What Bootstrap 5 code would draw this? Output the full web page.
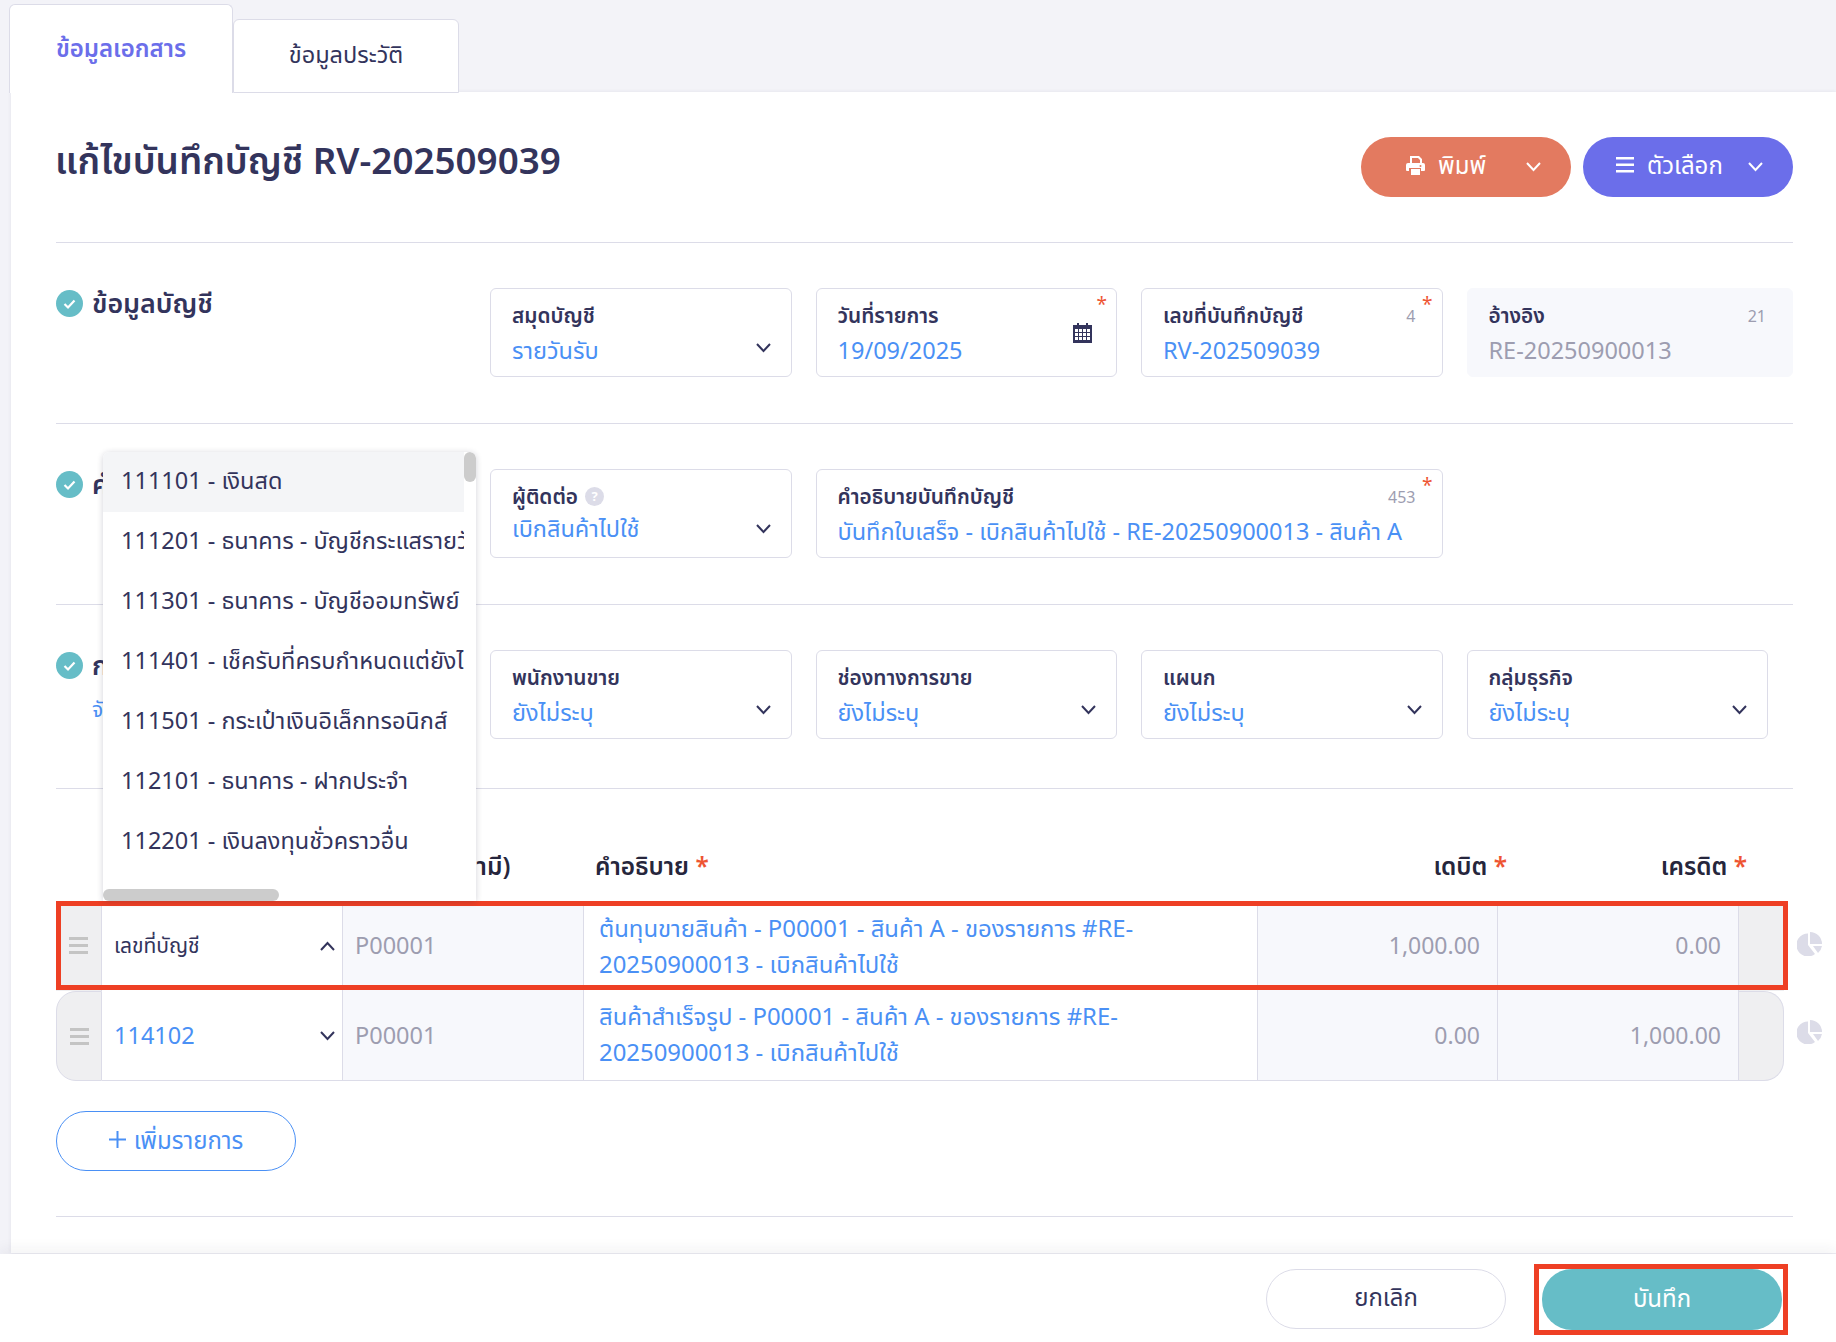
<!DOCTYPE html>
<html lang="th">
<head>
<meta charset="utf-8">
<title>แก้ไขบันทึกบัญชี</title>
<link href="https://cdn.jsdelivr.net/npm/bootstrap@5.3.0/dist/css/bootstrap.min.css" rel="stylesheet">
<style>
html,body{height:1342px;overflow:hidden}
body{background:#f3f3f8;font-family:"Noto Sans","Noto Sans Thai","Noto Sans Thai Looped",sans-serif;color:#33345c;font-size:23.5px}
.shell{height:1342px}
.tabbar{padding:4px 0 0 9px;height:93px;margin-bottom:-1px;position:relative;z-index:2}
.tabx{width:224px;height:89px;background:#fff;border:1px solid #dcdce8;border-bottom:0;border-radius:6px 6px 0 0;color:#6b6eea;font-weight:600;font-size:24px;padding-top:25px;text-align:center}
.tabx.off{margin-top:15px;height:74px;width:226px;color:#33345c;font-weight:400;font-size:23.5px;border-bottom:1px solid #dcdce8;padding-top:17px}
.sheet{background:#fff;margin-left:11px;padding:0 43px 0 45px;position:relative;box-shadow:0 0 4px rgba(40,40,90,.08)}
.headblock{padding:45px 0;border-bottom:1px solid #dcdce8}
.headblock h1{font-size:36.8px;font-weight:600;margin:0 0 0 -1px;line-height:46px;color:#33345c}
.pillgap{gap:12px}
.pillbtn{width:210px;height:60px;border-radius:30px;border:0;color:#fff;font-size:24px;padding:0 0 4px;position:relative}
.pillbtn:hover{color:#fff}
.orangepill{background:#e37a60;padding-left:45px}
.violetpill{background:#6b6eea;padding-left:33px}
.pilltext{margin-left:13px}
.chev{position:absolute;right:30px;top:25px}
.sect{display:flex;padding:45px 0 46px;border-bottom:1px solid #dcdce8}
.sect.tail{padding-bottom:49px}
.sidehead{width:434px;flex:none;display:flex;gap:9px;align-items:flex-start}
.sidehead strong{font-size:26.8px;font-weight:600;line-height:34px;margin-top:-2px}
.sublink{color:#4a90f5;font-size:21px;margin-top:12px;line-height:30px}
.okdot{width:27px;height:27px;flex:none;margin-top:2px}
.fieldgrid{display:grid;grid-template-columns:repeat(4,301.5px);column-gap:24px;flex:none}
.fieldgrid.wide{grid-template-columns:repeat(3,301.5px) 326.5px}
.fieldbox{height:89px;border:1px solid #dcdce8;border-radius:6px;padding:9px 21px 0;position:relative;background:#fff}
.fieldbox.span2{grid-column:span 2}
.fieldbox.ro{background:#f7f8fc;border-color:#f7f8fc}
.flabel{font-size:20.8px;font-weight:600;line-height:34px;color:#33345c;display:flex;align-items:center;gap:7px}
.fvalue{font-size:23.5px;line-height:34px;color:#4a90f5;white-space:nowrap;margin-top:1px}
.fvalue.lift{margin-top:-2px}
.ro .fvalue{color:#9d9db0}
.fchev{position:absolute;right:20px;top:54px}
.fcount{position:absolute;right:26px;top:15px;font-size:16px;color:#9d9db0;line-height:24px}
.fstar{position:absolute;right:9px;top:3px;color:#ee5533;font-size:19px;line-height:24px}
.fcal{position:absolute;right:24px;top:34px}
.qmark{width:19px;height:19px;border-radius:50%;background:#dcdce8;color:#fff;font-size:13px;font-weight:700;line-height:19px;text-align:center;display:inline-block}
.tblhead{height:113px;display:flex;font-size:24.4px;font-weight:600;color:#26263c;align-items:flex-end;padding-bottom:19px;line-height:34px;position:relative}
.thstar{color:#ee5533}
.tcol1{margin-left:294px;width:241px;white-space:nowrap;flex:none}
.tcol2{width:676px;padding-left:4px;flex:none}
.tcol3{width:240px;text-align:right;flex:none}
.tcol4{width:241px;text-align:right;padding-right:1px;flex:none}
.linerow{display:flex;width:1728px;height:89px;border-top:1px solid #dcdce8;position:relative;background:#fff}
.linerow.toprow>div:not(.redmark){padding-bottom:3px}
.linerow.lastrow{height:90px;border-top:0;background:transparent}
.lastrow>div{border-bottom:1px solid #dcdce8}
.gripcell{width:46px;flex:none;background:#efeff1;display:flex;align-items:center;justify-content:center;border-right:1px solid #dcdce8}
.lastrow .gripcell:first-child{border-top-left-radius:20px;border-bottom-left-radius:20px;border-left:1px solid #dcdce8;border-top:1px solid #dcdce8}
.gripcell.endcell{flex:1;width:auto;border-right:0}
.lastrow .gripcell.endcell{border-top-right-radius:20px;border-bottom-right-radius:20px;border-right:1px solid #dcdce8;border-top:1px solid #dcdce8}
.acctcell{width:241px;flex:none;padding-left:12px;border-right:1px solid #dcdce8;display:flex;align-items:center;justify-content:space-between;padding-right:7px;color:#4a90f5;background:#fff}
.acctcell.ph{color:#33345c;font-size:21px}
.codecell{width:241px;flex:none;background:#f7f8fc;border-right:1px solid #dcdce8;padding-left:12px;color:#9d9db0;display:flex;align-items:center}
.desccell{width:674px;flex:none;border-right:1px solid #dcdce8;padding-left:15px;padding-bottom:3px;color:#4a90f5;line-height:36px;display:flex;align-items:center;white-space:nowrap;font-size:23.9px;background:#fff}
.linerow.toprow>.desccell{padding-bottom:6px}
.numcell{width:240px;flex:none;background:#f7f8fc;border-right:1px solid #dcdce8;color:#9d9db0;display:flex;align-items:center;justify-content:flex-end;padding-right:17px;font-size:23px}
.numcell.c2{width:241px}
.redmark{position:absolute;left:0;top:-2px;width:1732px;height:89px;border:5px solid #ee3f24;pointer-events:none;z-index:1}
.pieicon{position:absolute;left:1741px;top:29px;z-index:2}
.addbtn{width:240px;height:60px;border:1px solid #4a90f5;border-radius:30px;color:#4a90f5;background:#fff;font-size:24px;margin:30px 0 45px;padding:0 0 3px;display:flex;align-items:center;justify-content:center;gap:8px}
.addbtn:hover{color:#4a90f5;background:#fff}
.rule{border-top:1px solid #dcdce8;height:37px}
.footbar{background:#fff;position:absolute;left:0;right:0;top:1254px;height:88px;box-shadow:0 -6px 12px rgba(30,30,60,.05);padding:15px 48px 0 0;display:flex;justify-content:flex-end;z-index:3}
.cancelbtn{width:240px;height:60px;border:1px solid #dcdce8;border-radius:30px;background:#fff;color:#33345c;font-size:24px;padding:0 0 4px;margin-right:28px}
.savewrap{border:5px solid #ee3f24;padding:0 0 0 3px;margin:-5px 0 0;height:71px;width:254px}
.savebtn{width:240px;height:61px;border-radius:30px;border:0;background:#66bdc7;color:#fff;font-size:24px;padding:0 0 4px}
.savebtn:hover{background:#66bdc7;color:#fff}
.acmenu.show{display:block;position:absolute;left:92px;top:360px;width:373px;height:449px;padding:0;margin:0;border:0;border-radius:6px 6px 0 0;box-shadow:0 1px 6px rgba(30,30,60,.2);overflow:hidden;z-index:4;font-size:23.5px;min-width:0}
.acitem.dropdown-item{height:60px;width:361px;line-height:56px;padding:0 0 0 18px;color:#33345c;overflow:hidden;white-space:nowrap}
.acitem.active,.acitem.dropdown-item:active{background:#f4f5f7;color:#33345c}
.thumbv{position:absolute;left:361px;top:0;width:12px;height:30px;border-radius:6px;background:#ccc}
.thumbh{position:absolute;left:0;top:437px;width:176px;height:12px;border-radius:6px;background:#ccc}
</style>
</head>
<body>
<div class="shell position-relative">
  <div class="tabbar d-flex">
    <div class="tabx">ข้อมูลเอกสาร</div>
    <div class="tabx off">ข้อมูลประวัติ</div>
  </div>
  <div class="sheet">
    <div class="headblock d-flex justify-content-between">
      <h1>แก้ไขบันทึกบัญชี RV-202509039</h1>
      <div class="d-flex pillgap">
        <button class="btn pillbtn orangepill d-flex align-items-center" type="button">
          <svg width="19" height="19" viewBox="0 0 19 19" fill="#fff"><path fill-rule="evenodd" d="M4 0h9l3 3v4h1a2 2 0 0 1 2 2v5a1 1 0 0 1-1 1h-3v-3H3v3H1a1 1 0 0 1-1-1V9a2 2 0 0 1 2-2h2zM6 2v5h8V4l-2-2zM14.500 9a1 1 0 1 0 0 2 1 1 0 0 0 0-2z"/><path d="M5 13h9v6H5z"/></svg><span class="pilltext">พิมพ์</span>
          <svg class="chev" width="15" height="10" viewBox="0 0 15 10" fill="none" stroke="#fff" stroke-width="2"><path d="M1 1l6.500 7L14 1"/></svg>
        </button>
        <button class="btn pillbtn violetpill d-flex align-items-center" type="button">
          <svg width="18" height="16" viewBox="0 0 18 16" fill="#fff"><path d="M0 0h18v2.500H0zM0 6.500h18V9H0zM0 13h18v2.500H0z"/></svg><span class="pilltext">ตัวเลือก</span>
          <svg class="chev" width="15" height="10" viewBox="0 0 15 10" fill="none" stroke="#fff" stroke-width="2"><path d="M1 1l6.500 7L14 1"/></svg>
        </button>
      </div>
    </div>

    <div class="sect">
      <div class="sidehead">
        <svg class="okdot" viewBox="0 0 27 27"><circle cx="13.500" cy="13.500" r="13.500" fill="#66bdc7"/><path d="M8.500 14l3.500 3.500 6.500-7" fill="none" stroke="#fff" stroke-width="2.200"/></svg>
        <strong>ข้อมูลบัญชี</strong>
      </div>
      <div class="fieldgrid wide">
        <div class="fieldbox"><div class="flabel">สมุดบัญชี</div><div class="fvalue">รายวันรับ</div>
          <svg class="fchev" width="15" height="10" viewBox="0 0 15 10" fill="none" stroke="#33345c" stroke-width="2"><path d="M1 1l6.500 7L14 1"/></svg></div>
        <div class="fieldbox"><div class="flabel">วันที่รายการ</div><div class="fvalue">19/09/2025</div><span class="fstar">*</span>
          <svg class="fcal" width="19" height="20" viewBox="0 0 19 20"><path fill="#33345c" d="M4 0h2v2H4zM13 0h2v2h-2zM0 2h19v18H0z"/><g fill="#fff"><path d="M2 6h3v3H2zM6 6h3v3H6zM10 6h3v3h-3zM14 6h3v3h-3zM2 10h3v3H2zM6 10h3v3H6zM10 10h3v3h-3zM14 10h3v3h-3zM2 14h3v3H2zM6 14h3v3H6zM10 14h3v3h-3zM14 14h3v3h-3z"/></g></svg></div>
        <div class="fieldbox"><div class="flabel">เลขที่บันทึกบัญชี</div><div class="fvalue">RV-202509039</div><span class="fcount">4</span><span class="fstar">*</span></div>
        <div class="fieldbox ro"><div class="flabel">อ้างอิง</div><div class="fvalue">RE-20250900013</div><span class="fcount">21</span></div>
      </div>
    </div>

    <div class="sect">
      <div class="sidehead">
        <svg class="okdot" viewBox="0 0 27 27"><circle cx="13.500" cy="13.500" r="13.500" fill="#66bdc7"/><path d="M8.500 14l3.500 3.500 6.500-7" fill="none" stroke="#fff" stroke-width="2.200"/></svg>
        <strong>คำอธิบาย</strong>
      </div>
      <div class="fieldgrid wide">
        <div class="fieldbox"><div class="flabel">ผู้ติดต่อ <span class="qmark">?</span></div><div class="fvalue lift">เบิกสินค้าไปใช้</div>
          <svg class="fchev" width="15" height="10" viewBox="0 0 15 10" fill="none" stroke="#33345c" stroke-width="2"><path d="M1 1l6.500 7L14 1"/></svg></div>
        <div class="fieldbox span2"><div class="flabel">คำอธิบายบันทึกบัญชี</div><div class="fvalue">บันทึกใบเสร็จ - เบิกสินค้าไปใช้ - RE-20250900013 - สินค้า A</div><span class="fcount">453</span><span class="fstar">*</span></div>
      </div>
    </div>

    <div class="sect tail">
      <div class="sidehead">
        <svg class="okdot" viewBox="0 0 27 27"><circle cx="13.500" cy="13.500" r="13.500" fill="#66bdc7"/><path d="M8.500 14l3.500 3.500 6.500-7" fill="none" stroke="#fff" stroke-width="2.200"/></svg>
        <div><strong class="d-block">กลุ่มข้อมูล</strong><div class="sublink">จัดการ</div></div>
      </div>
      <div class="fieldgrid">
        <div class="fieldbox"><div class="flabel">พนักงานขาย</div><div class="fvalue">ยังไม่ระบุ</div><svg class="fchev" width="15" height="10" viewBox="0 0 15 10" fill="none" stroke="#33345c" stroke-width="2"><path d="M1 1l6.500 7L14 1"/></svg></div>
        <div class="fieldbox"><div class="flabel">ช่องทางการขาย</div><div class="fvalue">ยังไม่ระบุ</div><svg class="fchev" width="15" height="10" viewBox="0 0 15 10" fill="none" stroke="#33345c" stroke-width="2"><path d="M1 1l6.500 7L14 1"/></svg></div>
        <div class="fieldbox"><div class="flabel">แผนก</div><div class="fvalue">ยังไม่ระบุ</div><svg class="fchev" width="15" height="10" viewBox="0 0 15 10" fill="none" stroke="#33345c" stroke-width="2"><path d="M1 1l6.500 7L14 1"/></svg></div>
        <div class="fieldbox"><div class="flabel">กลุ่มธุรกิจ</div><div class="fvalue">ยังไม่ระบุ</div><svg class="fchev" width="15" height="10" viewBox="0 0 15 10" fill="none" stroke="#33345c" stroke-width="2"><path d="M1 1l6.500 7L14 1"/></svg></div>
      </div>
    </div>

    <div class="tblhead">
      <div class="tcol1">รหัสสินค้า (ถ้ามี)</div>
      <div class="tcol2">คำอธิบาย <span class="thstar">*</span></div>
      <div class="tcol3">เดบิต <span class="thstar">*</span></div>
      <div class="tcol4">เครดิต <span class="thstar">*</span></div>
    </div>

    <div class="linerow toprow">
      <div class="redmark"></div>
      <div class="gripcell"><svg width="19" height="17" viewBox="0 0 19 17" fill="#c4c4c4"><path d="M0 0h19v3H0zM0 7h19v3H0zM0 14h19v3H0z"/></svg></div>
      <div class="acctcell ph">เลขที่บัญชี<svg width="15" height="10" viewBox="0 0 15 10" fill="none" stroke="#33345c" stroke-width="2"><path d="M1 9l6.500-7L14 9"/></svg></div>
      <div class="codecell">P00001</div>
      <div class="desccell"><span>ต้นทุนขายสินค้า - P00001 - สินค้า A - ของรายการ #RE-<br>20250900013 - เบิกสินค้าไปใช้</span></div>
      <div class="numcell">1,000.00</div>
      <div class="numcell c2">0.00</div>
      <div class="gripcell endcell"></div>
      <svg class="pieicon" width="25" height="24" viewBox="0 0 25 24" fill="#dcdce8"><path d="M11 1.500A11.500 11.500 0 1 0 18 22L11 13z"/><path d="M13 0a12 12 0 0 1 12 12H13z"/><path d="M16 14h9a12 12 0 0 1-4 7z"/></svg>
    </div>
    <div class="linerow lastrow">
      <div class="gripcell"><svg width="19" height="17" viewBox="0 0 19 17" fill="#c4c4c4"><path d="M0 0h19v3H0zM0 7h19v3H0zM0 14h19v3H0z"/></svg></div>
      <div class="acctcell">114102<svg width="15" height="10" viewBox="0 0 15 10" fill="none" stroke="#33345c" stroke-width="2"><path d="M1 1l6.500 7L14 1"/></svg></div>
      <div class="codecell">P00001</div>
      <div class="desccell"><span>สินค้าสำเร็จรูป - P00001 - สินค้า A - ของรายการ #RE-<br>20250900013 - เบิกสินค้าไปใช้</span></div>
      <div class="numcell">0.00</div>
      <div class="numcell c2">1,000.00</div>
      <div class="gripcell endcell"></div>
      <svg class="pieicon" width="25" height="24" viewBox="0 0 25 24" fill="#dcdce8"><path d="M11 1.500A11.500 11.500 0 1 0 18 22L11 13z"/><path d="M13 0a12 12 0 0 1 12 12H13z"/><path d="M16 14h9a12 12 0 0 1-4 7z"/></svg>
    </div>

    <button class="btn addbtn" type="button"><svg width="17" height="17" viewBox="0 0 17 17" fill="#4a90f5"><path d="M7.500 0h2v7.500H17v2H9.500V17h-2V9.500H0v-2h7.500z"/></svg>เพิ่มรายการ</button>
    <div class="rule"></div>

    <div class="dropdown-menu show acmenu">
      <a class="dropdown-item acitem active" href="#">111101 - เงินสด</a>
      <a class="dropdown-item acitem" href="#">111201 - ธนาคาร - บัญชีกระแสรายวัน</a>
      <a class="dropdown-item acitem" href="#">111301 - ธนาคาร - บัญชีออมทรัพย์</a>
      <a class="dropdown-item acitem" href="#">111401 - เช็ครับที่ครบกำหนดแต่ยังไม่ได้นำฝาก</a>
      <a class="dropdown-item acitem" href="#">111501 - กระเป๋าเงินอิเล็กทรอนิกส์</a>
      <a class="dropdown-item acitem" href="#">112101 - ธนาคาร - ฝากประจำ</a>
      <a class="dropdown-item acitem" href="#">112201 - เงินลงทุนชั่วคราวอื่น</a>
      <div class="thumbv"></div><div class="thumbh"></div>
    </div>
  </div>

  <div class="footbar">
    <button class="btn cancelbtn" type="button">ยกเลิก</button>
    <div class="savewrap"><button class="btn savebtn" type="button">บันทึก</button></div>
  </div>
</div>
<script src="https://cdn.jsdelivr.net/npm/bootstrap@5.3.0/dist/js/bootstrap.bundle.min.js"></script>
</body>
</html>
